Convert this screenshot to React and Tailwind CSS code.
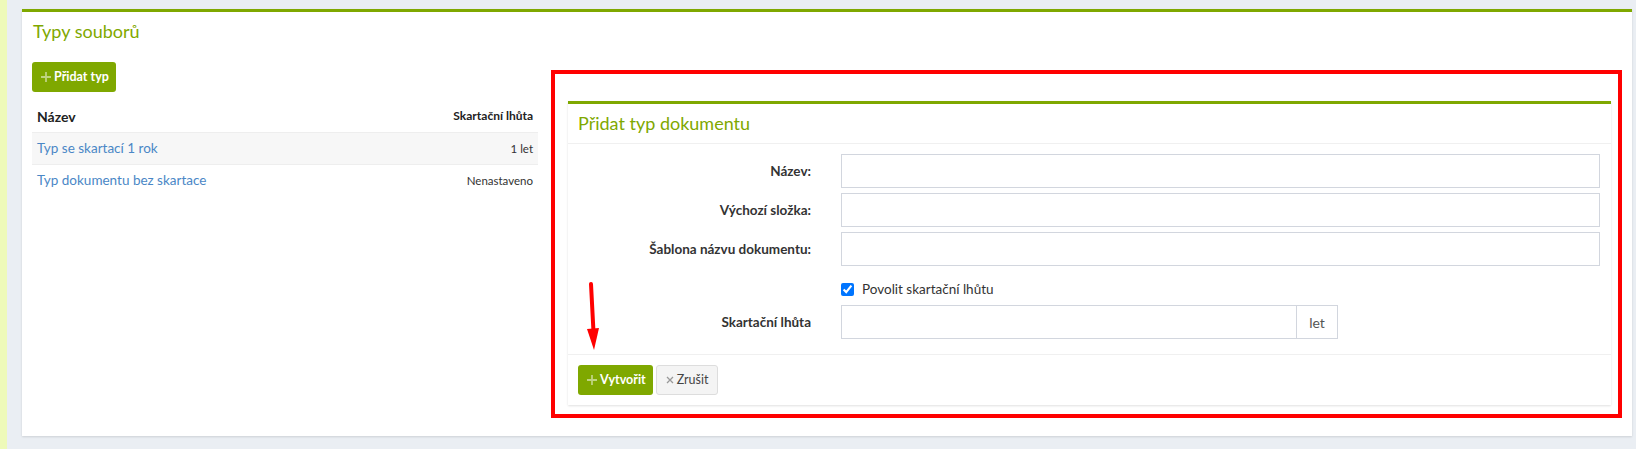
import React from "react";

const rows = [
  { name: "Typ se skartací 1 rok", period: "1 let" },
  { name: "Typ dokumentu bez skartace", period: "Nenastaveno" },
];

const fields = ["Název:", "Výchozí složka:", "Šablona názvu dokumentu:"];

const font = { fontFamily: "Lato, 'Open Sans', sans-serif" };

const PlusIcon = () => (
  <svg width="10" height="10" viewBox="0 0 10 10" className="mr-[3px] shrink-0">
    <path d="M5 0v10M0 5h10" stroke="rgba(255,255,255,0.5)" strokeWidth="1.8" />
  </svg>
);

const App = () => {
  return (
    <div className="flex min-h-screen bg-[#eaeef3]" style={font}>
      <div className="w-[7px] shrink-0 bg-[#eefab9]" />

      <main className="flex-1 pl-[15px] pr-[15px] pt-[9px] pb-[14px]">
        <div className="border-t-[3px] border-[#7fa800] bg-white px-[10px] pb-[18px] shadow-[0_1px_2px_rgba(0,0,0,0.12)]">
          <div className="flex h-[38px] items-center pl-[1px] text-[18px] text-[#7fa800]">
            Typy souborů
          </div>

          <div className="mt-[12px] flex items-start">
            {/* list of types */}
            <div className="w-[506px] shrink-0">
              <button className="flex h-[30px] items-center rounded-[3px] bg-[#7fa800] pl-[9px] pr-[7px] text-[12.5px] font-bold text-white">
                <PlusIcon />
                Přidat typ
              </button>

              <div className="mt-[8px] flex h-[32px] items-center justify-between px-[5px] text-[#222]">
                <span className="text-[14px] font-bold">Název</span>
                <span className="text-[12px] font-bold">Skartační lhůta</span>
              </div>

              {rows.map((r, i) => (
                <div
                  key={r.name}
                  className={`flex h-[32px] items-center justify-between border-t border-[#eeeeee] px-[5px] ${
                    i === 0 ? "bg-[#f7f7f7]" : "bg-white"
                  }`}
                >
                  <a className="text-[13.5px] text-[#4a87c6]">{r.name}</a>
                  <span className="text-[11.5px] text-[#333]">{r.period}</span>
                </div>
              ))}
            </div>

            {/* add form, highlighted */}
            <div className="ml-[13px] mt-[8px] w-[1071px] shrink-0 border-4 border-[#ff0000] pl-[13px] pr-[7px] pt-[27px] pb-[9px]">
              <div className="border-t-[3px] border-[#7fa800] bg-white shadow-[0_1px_2px_rgba(0,0,0,0.12)]">
                <div className="flex h-[40px] items-center border-b border-[#f0f0f0] pl-[10px] text-[18px] text-[#7fa800]">
                  Přidat typ dokumentu
                </div>

                <div className="relative border-b border-[#f0f0f0] pt-[10px] pb-[15px] pr-[11px]">
                  <div className="flex flex-col gap-[5px]">
                    {fields.map((f) => (
                      <div key={f} className="flex items-center">
                        <label className="w-[243px] shrink-0 text-right text-[13.5px] font-bold text-[#333]">
                          {f}
                        </label>
                        <input className="ml-[30px] h-[34px] flex-1 border border-[#d2d6de] bg-white outline-none" />
                      </div>
                    ))}
                  </div>

                  <div className="mt-[12px] flex h-[22px] items-center pl-[273px]">
                    <input
                      type="checkbox"
                      defaultChecked
                      className="m-0 h-[13px] w-[13px] accent-[#0075ff]"
                    />
                    <span className="ml-[8px] text-[13.5px] text-[#333]">Povolit skartační lhůtu</span>
                  </div>

                  <div className="mt-[5px] flex items-center">
                    <label className="w-[243px] shrink-0 text-right text-[13.5px] font-bold text-[#333]">
                      Skartační lhůta
                    </label>
                    <div className="ml-[30px] flex h-[34px] w-[497px]">
                      <input className="h-full flex-1 border border-[#d2d6de] bg-white outline-none" />
                      <span className="flex w-[41px] items-center justify-center border border-l-0 border-[#d2d6de] text-[14px] text-[#555]">
                        let
                      </span>
                    </div>
                  </div>

                  {/* pointer arrow */}
                  <svg
                    className="absolute left-[19px] top-[138px]"
                    width="14"
                    height="70"
                    viewBox="0 0 14 70"
                  >
                    <line x1="4" y1="2" x2="6.5" y2="50" stroke="#ff0000" strokeWidth="4" strokeLinecap="round" />
                    <polygon points="0,47 12,46 7,68" fill="#ff0000" />
                  </svg>
                </div>

                <div className="flex gap-[3px] py-[10px] pl-[10px]">
                  <button className="flex h-[30px] items-center rounded-[3px] bg-[#7fa800] pl-[9px] pr-[7px] text-[12.5px] font-bold text-white">
                    <PlusIcon />
                    Vytvořit
                  </button>
                  <button className="flex h-[30px] items-center rounded-[3px] border border-[#dddddd] bg-[#f4f4f4] px-[9px] text-[12.5px] text-[#444]">
                    <svg width="8" height="8" viewBox="0 0 8 8" className="mr-[3px]">
                      <path d="M1 1l6 6M7 1l-6 6" stroke="#999" strokeWidth="1.3" />
                    </svg>
                    Zrušit
                  </button>
                </div>
              </div>
            </div>
          </div>
        </div>
      </main>
    </div>
  );
};

export default App;
